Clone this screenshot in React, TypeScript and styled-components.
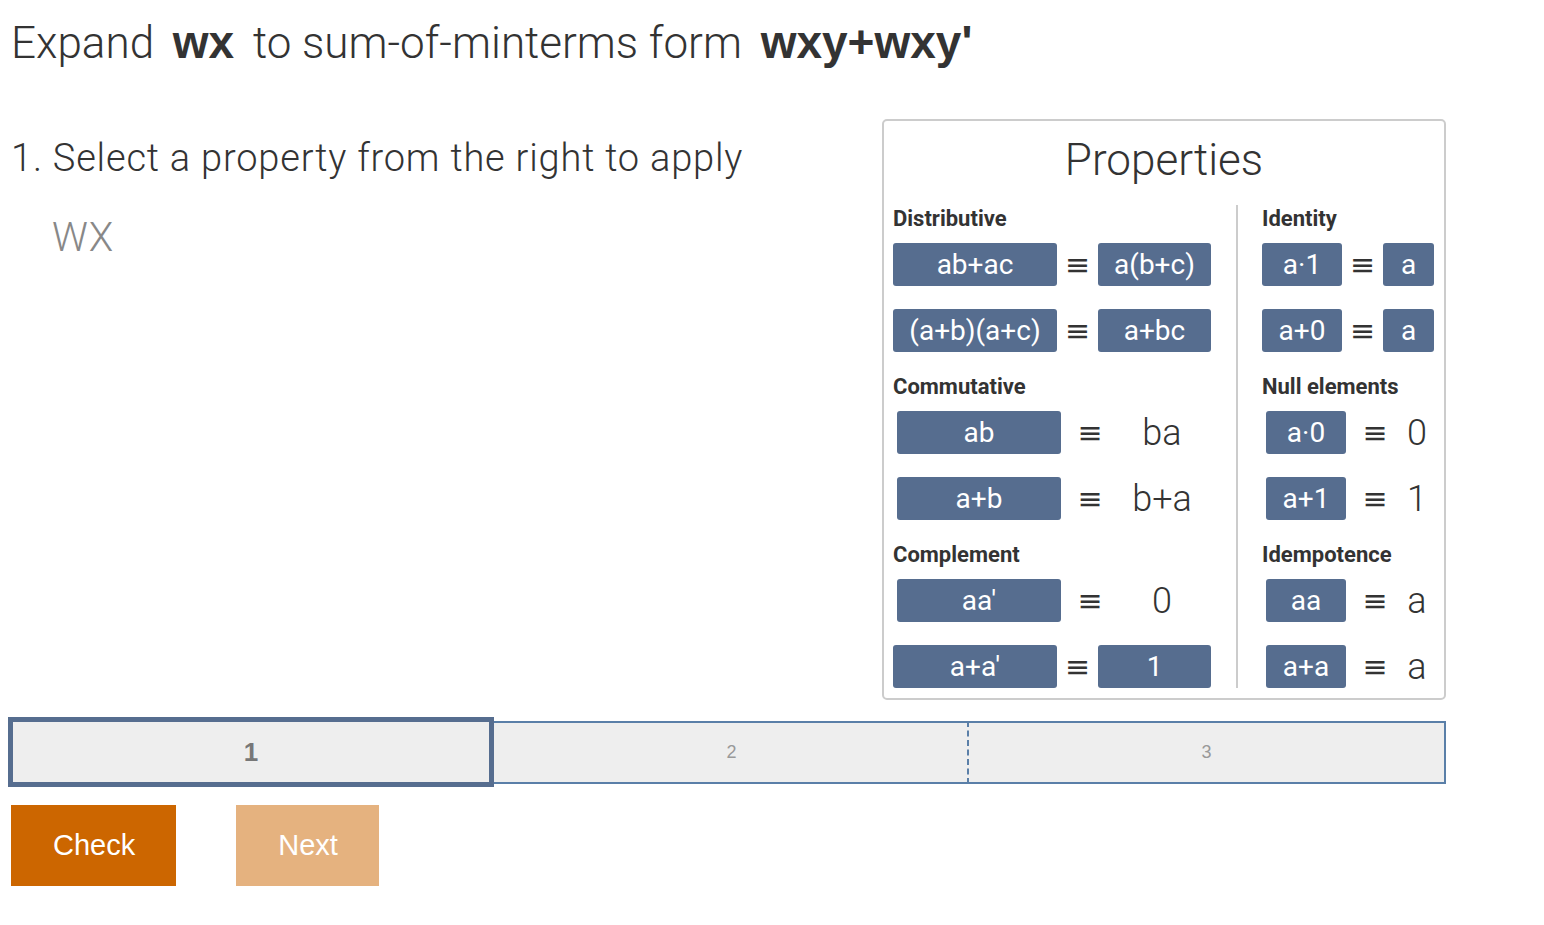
import styled, { createGlobalStyle } from 'styled-components';

const GlobalStyle = createGlobalStyle`
  body {
    margin: 8px;
    font-family: Roboto, "Noto Sans", sans-serif;
    color: #333;
    background: #fff;
  }
`;

const Page = styled.div`
  width: 1438px;
`;

const Title = styled.h1`
  margin: 8px 0 0 0;
  padding-left: 3px;
  font-size: 44px;
  line-height: 52px;
  height: 52px;
  font-weight: 300;
  color: #333;
  b {
    font-family: "Liberation Sans", Arial, sans-serif;
    font-size: 46px;
    font-weight: 700;
    padding: 0 8px;
  }
`;

const Content = styled.div`
  display: flex;
  align-items: flex-start;
  margin-top: 51px;
`;

const LeftSide = styled.div`
  flex: 1;
  padding-left: 3px;
`;

const Instruction = styled.div`
  font-size: 38px;
  line-height: 45px;
  font-weight: 300;
  letter-spacing: 0.8px;
  margin-top: 17px;
`;

const Expression = styled.div`
  font-size: 40px;
  line-height: 44px;
  font-weight: 300;
  letter-spacing: 1px;
  color: #888;
  margin: 35px 0 0 41px;
`;

const Panel = styled.div`
  width: 564px;
  box-sizing: border-box;
  border: 2px solid #ccc;
  border-radius: 5px;
  padding: 13px 0 10px 9px;
`;

const PanelTitle = styled.div`
  text-align: center;
  font-size: 44px;
  line-height: 52px;
  font-weight: 300;
  margin-bottom: 19px;
  padding-right: 9px;
`;

const Columns = styled.div`
  display: flex;
  align-items: stretch;
`;

const Column = styled.div<{ $right?: boolean }>`
  ${(p) => (p.$right ? 'flex: 1; padding-left: 24px;' : 'width: 343px;')}
  padding-top: 2px;
`;

const Divider = styled.div`
  width: 2px;
  background: #ccc;
`;

const SectionLabel = styled.div`
  font-size: 22px;
  line-height: 24px;
  font-weight: 700;
  margin-bottom: 12px;
`;

const Row = styled.div<{ $indent: number }>`
  display: flex;
  align-items: center;
  height: 43px;
  margin-left: ${(p) => p.$indent}px;
  margin-bottom: 23px;
  &:last-child {
    margin-bottom: 0;
  }
`;

const Section = styled.div`
  margin-bottom: 23px;
  &:last-child {
    margin-bottom: 0;
  }
`;

const PropButton = styled.div<{ $w: number }>`
  width: ${(p) => p.$w}px;
  height: 43px;
  background: #566d8f;
  border-radius: 3px;
  color: #fff;
  font-size: 28px;
  display: flex;
  align-items: center;
  justify-content: center;
  cursor: pointer;
`;

const Equiv = styled.div<{ $w: number }>`
  width: ${(p) => p.$w}px;
  text-align: center;
  font-family: "DejaVu Sans", sans-serif;
  font-size: 30px;
  line-height: 43px;
  color: #333;
`;

const Plain = styled.div<{ $w: number }>`
  width: ${(p) => p.$w}px;
  text-align: center;
  font-size: 36px;
  font-weight: 300;
  color: #333;
`;

const StepBar = styled.div`
  display: flex;
  align-items: flex-start;
  margin-top: 21px;
  height: 63px;
`;

const Step = styled.div<{ $active?: boolean; $dashed?: boolean; $last?: boolean }>`
  flex: 1;
  box-sizing: border-box;
  background: #eee;
  display: flex;
  align-items: center;
  justify-content: center;
  font-family: "Liberation Sans", Arial, sans-serif;
  ${(p) =>
    p.$active
      ? `
    height: 70px;
    margin-top: -4px;
    border: 5px solid #566d8f;
    font-size: 26px;
    font-weight: 700;
    color: #777;
    flex: 0 0 486px;
  `
      : `
    height: 63px;
    border-top: 2px solid #5a7fa8;
    border-bottom: 2px solid #5a7fa8;
    font-size: 18px;
    color: #999;
  `}
  ${(p) => (p.$dashed ? 'border-left: 2px dashed #5a7fa8; margin-left: -2px;' : '')}
  ${(p) => (p.$last ? 'border-right: 2px solid #5a7fa8;' : '')}
`;

const Actions = styled.div`
  display: flex;
  gap: 60px;
  margin: 21px 0 0 3px;
`;

const ActionButton = styled.button<{ $disabled?: boolean }>`
  border: none;
  height: 81px;
  padding: 0 41px 0 42px;
  font-family: "Liberation Sans", Arial, sans-serif;
  font-size: 29px;
  color: #fff;
  background: ${(p) => (p.$disabled ? '#e5b27f' : '#cc6600')};
  cursor: ${(p) => (p.$disabled ? 'default' : 'pointer')};
`;

type Side = { kind: 'btn' | 'text'; label: string; w: number };
type PropRow = { left: string; lw: number; indent: number; eq: number; right: Side };
type PropSection = { name: string; rows: PropRow[] };

const leftSections: PropSection[] = [
  {
    name: 'Distributive',
    rows: [
      { left: 'ab+ac', lw: 164, indent: 0, eq: 41, right: { kind: 'btn', label: 'a(b+c)', w: 113 } },
      { left: '(a+b)(a+c)', lw: 164, indent: 0, eq: 41, right: { kind: 'btn', label: 'a+bc', w: 113 } },
    ],
  },
  {
    name: 'Commutative',
    rows: [
      { left: 'ab', lw: 164, indent: 4, eq: 58, right: { kind: 'text', label: 'ba', w: 86 } },
      { left: 'a+b', lw: 164, indent: 4, eq: 58, right: { kind: 'text', label: 'b+a', w: 86 } },
    ],
  },
  {
    name: 'Complement',
    rows: [
      { left: "aa'", lw: 164, indent: 4, eq: 58, right: { kind: 'text', label: '0', w: 86 } },
      { left: "a+a'", lw: 164, indent: 0, eq: 41, right: { kind: 'btn', label: '1', w: 113 } },
    ],
  },
];

const rightSections: PropSection[] = [
  {
    name: 'Identity',
    rows: [
      { left: 'a·1', lw: 80, indent: 0, eq: 41, right: { kind: 'btn', label: 'a', w: 51 } },
      { left: 'a+0', lw: 80, indent: 0, eq: 41, right: { kind: 'btn', label: 'a', w: 51 } },
    ],
  },
  {
    name: 'Null elements',
    rows: [
      { left: 'a·0', lw: 80, indent: 4, eq: 58, right: { kind: 'text', label: '0', w: 26 } },
      { left: 'a+1', lw: 80, indent: 4, eq: 58, right: { kind: 'text', label: '1', w: 26 } },
    ],
  },
  {
    name: 'Idempotence',
    rows: [
      { left: 'aa', lw: 80, indent: 4, eq: 58, right: { kind: 'text', label: 'a', w: 26 } },
      { left: 'a+a', lw: 80, indent: 4, eq: 58, right: { kind: 'text', label: 'a', w: 26 } },
    ],
  },
];

function Sections({ list }: { list: PropSection[] }) {
  return (
    <>
      {list.map((section) => (
        <Section key={section.name}>
          <SectionLabel>{section.name}</SectionLabel>
          {section.rows.map((row, i) => (
            <Row key={i} $indent={row.indent}>
              <PropButton $w={row.lw}>{row.left}</PropButton>
              <Equiv $w={row.eq}>≡</Equiv>
              {row.right.kind === 'btn' ? (
                <PropButton $w={row.right.w}>{row.right.label}</PropButton>
              ) : (
                <Plain $w={row.right.w}>{row.right.label}</Plain>
              )}
            </Row>
          ))}
        </Section>
      ))}
    </>
  );
}

function App() {
  return (
    <Page>
      <GlobalStyle />
      <Title>
        Expand <b>wx</b> to sum-of-minterms form <b>wxy+wxy'</b>
      </Title>
      <Content>
        <LeftSide>
          <Instruction>1. Select a property from the right to apply</Instruction>
          <Expression>WX</Expression>
        </LeftSide>
        <Panel>
          <PanelTitle>Properties</PanelTitle>
          <Columns>
            <Column>
              <Sections list={leftSections} />
            </Column>
            <Divider />
            <Column $right>
              <Sections list={rightSections} />
            </Column>
          </Columns>
        </Panel>
      </Content>
      <StepBar>
        <Step $active>1</Step>
        <Step>2</Step>
        <Step $dashed $last>3</Step>
      </StepBar>
      <Actions>
        <ActionButton>Check</ActionButton>
        <ActionButton $disabled>Next</ActionButton>
      </Actions>
    </Page>
  );
}

export default App;
